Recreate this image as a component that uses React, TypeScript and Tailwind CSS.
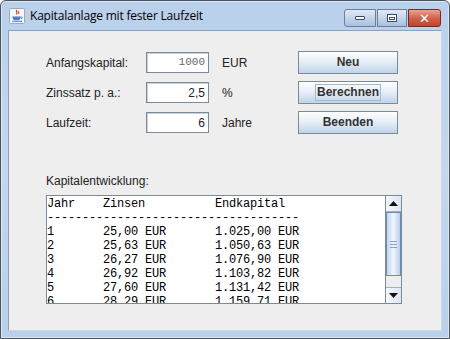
import React from 'react';

const rows = [
  ['1', '25,00', '1.025,00'],
  ['2', '25,63', '1.050,63'],
  ['3', '26,27', '1.076,90'],
  ['4', '26,92', '1.103,82'],
  ['5', '27,60', '1.131,42'],
  ['6', '28,29', '1.159,71'],
];

function pad(s: string, n: number) {
  return s + ' '.repeat(Math.max(0, n - s.length));
}

const lines = [
  pad('Jahr', 8) + pad('Zinsen', 16) + 'Endkapital',
  '-'.repeat(36),
  ...rows.map(([y, z, e]) => pad(y, 8) + pad(`${z} EUR`, 16) + `${e} EUR`),
];

function JavaIcon() {
  return (
    <svg width="16" height="16" viewBox="0 0 16 16">
      <rect x="0.5" y="0.5" width="15" height="15" rx="1" fill="#f4f6fa" stroke="#9aa9bd" />
      <path d="M8 2c-2 1.5 1 2.5-0.5 4.5M9.5 3c-1 1 1 1.6 0 3" stroke="#e04a1b" strokeWidth="1.2" fill="none" />
      <path d="M3.5 8.5h8v1.2c0 1.6-1.5 2.6-4 2.6s-4-1-4-2.6z" fill="#4a7ec0" />
      <path d="M11.5 9h1.2c0.8 0 0.8 1.5-0.6 1.8" stroke="#4a7ec0" fill="none" />
      <path d="M3 13.3h10" stroke="#4a7ec0" strokeWidth="1" />
    </svg>
  );
}

function Field({ value, mono }: { value: string; mono?: boolean }) {
  return (
    <div className="w-[63px] h-[21px] bg-white border border-[#7a8a99] shadow-[inset_1px_1px_0_#c9d3de] flex items-center justify-end pr-[3px]">
      {mono ? (
        <span className="text-[11px] text-[#666] font-['Liberation_Mono',monospace]">{value}</span>
      ) : (
        <span className="text-[12px] text-[#222]">{value}</span>
      )}
    </div>
  );
}

function Button({ label, focused }: { label: string; focused?: boolean }) {
  return (
    <div className="w-[100px] h-[23px] border border-[#7a8a99] bg-gradient-to-b from-white via-[#e4edf7] to-[#bfd3ea] flex items-center justify-center">
      <span
        className={`text-[12px] font-bold text-[#333] leading-[15px] ${focused ? 'border border-[#a3b8cc] px-px' : ''}`}
      >
        {label}
      </span>
    </div>
  );
}

function Arrow({ up }: { up?: boolean }) {
  return (
    <svg width="9" height="5" viewBox="0 0 9 5">
      <path d={up ? 'M0 5h9L4.5 0z' : 'M0 0h9L4.5 5z'} fill="#111" />
    </svg>
  );
}

export default function App() {
  return (
    <div className="w-[450px] h-[339px] bg-white font-['Liberation_Sans',sans-serif]">
      <div className="w-full h-full flex flex-col rounded-t-[6px] border border-[#47535f] bg-gradient-to-b from-[#bad0ea] via-[#c4d7ee] to-[#b9d0ea] shadow-[inset_0_0_0_1px_#dce8f5]">
        {/* title bar */}
        <div className="h-[29px] flex items-center pl-[8px] pr-[8px]">
          <JavaIcon />
          <span className="ml-[5px] text-[12px] text-black font-['Open_Sans',sans-serif] tracking-[-0.2px]">
            Kapitalanlage mit fester Laufzeit
          </span>
          <div className="ml-auto flex gap-[1px] self-start mt-[8px]">
            <div className="w-[32px] h-[18px] rounded-l-[3px] border border-[#6e7f95] bg-gradient-to-b from-[#dfe9f5] via-[#c4d5ea] to-[#a9bfdc] flex items-center justify-center">
              <div className="w-[10px] h-[4px] bg-white border border-[#3a4a5e] rounded-[1px]" />
            </div>
            <div className="w-[30px] h-[18px] border border-[#6e7f95] bg-gradient-to-b from-[#dfe9f5] via-[#c4d5ea] to-[#a9bfdc] flex items-center justify-center">
              <div className="w-[10px] h-[8px] bg-white border border-[#3a4a5e] flex items-center justify-center">
                <div className="w-[6px] h-[3px] border border-[#3a4a5e]" />
              </div>
            </div>
            <div className="w-[33px] h-[18px] rounded-r-[3px] border border-[#7a2a22] bg-gradient-to-b from-[#e8a391] via-[#d0634e] to-[#c0442d] flex items-center justify-center">
              <span className="text-white font-bold text-[13px] leading-none font-['DejaVu_Sans',sans-serif]">✕</span>
            </div>
          </div>
        </div>

        {/* client area */}
        <div className="mx-[7px] mb-[7px] flex-1 bg-[#eeeeee] border border-[#8aa2c0] border-r-[#c9d9ee] border-b-[#c9d9ee] pl-[37px] pt-[20px]">
          <div className="flex flex-col gap-[7px]">
            {[
              ['Anfangskapital:', '1000', 'EUR', 'Neu'],
              ['Zinssatz p. a.:', '2,5', '%', 'Berechnen'],
              ['Laufzeit:', '6', 'Jahre', 'Beenden'],
            ].map(([label, value, unit, btn], i) => (
              <div key={label} className="flex items-center h-[23px]">
                <span className="w-[100px] text-[12px] text-[#222]">{label}</span>
                <Field value={value} mono={i === 0} />
                <span className="ml-[13px] w-[76px] text-[12px] text-[#222]">{unit}</span>
                <Button label={btn} focused={i === 1} />
              </div>
            ))}
          </div>

          <div className="mt-[39px] text-[12px] text-[#222] leading-[16px]">Kapitalentwicklung:</div>

          <div className="mt-[6px] w-[356px] h-[109px] flex border border-[#7a8a99] bg-white">
            <div className="flex-1 overflow-hidden pt-px">
              <pre className="font-['Liberation_Mono',monospace] text-[12px] leading-[14px] tracking-[-0.2px] text-black">
                {lines.join('\n')}
              </pre>
            </div>
            <div className="w-[16px] flex flex-col border-l border-[#7a8a99] bg-[#eeeeee]">
              <div className="h-[16px] flex items-center justify-center bg-gradient-to-r from-[#f4f8fc] to-[#dce6f2] border-b border-[#a0b0c0]">
                <Arrow up />
              </div>
              <div className="h-[64px] border border-[#6f8bb8] bg-gradient-to-r from-[#c3d4ef] via-[#f2f6fc] to-[#b8cdec] flex flex-col items-center justify-center gap-[2px]">
                <div className="w-[7px] h-px bg-[#8aa0c8]" />
                <div className="w-[7px] h-px bg-[#8aa0c8]" />
                <div className="w-[7px] h-px bg-[#8aa0c8]" />
              </div>
              <div className="flex-1" />
              <div className="h-[16px] flex items-center justify-center bg-gradient-to-r from-[#f4f8fc] to-[#dce6f2] border-t border-[#a0b0c0]">
                <Arrow />
              </div>
            </div>
          </div>
        </div>
      </div>
    </div>
  );
}
